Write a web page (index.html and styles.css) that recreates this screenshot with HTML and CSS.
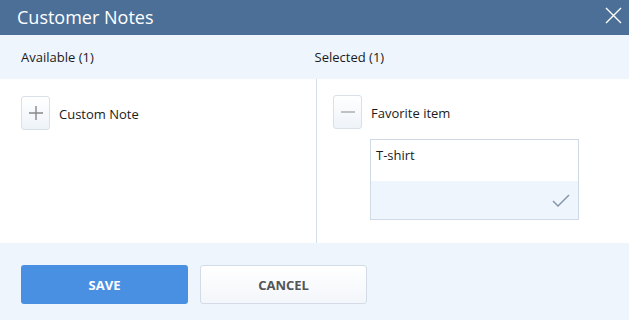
FILE: index.html
```html
<!DOCTYPE html>
<html>
<head>
<meta charset="utf-8">
<link rel="stylesheet" href="styles.css">
</head>
<body>
<div class="dialog">
  <div class="titlebar">
    <div class="title">Customer Notes</div>
    <button class="close" aria-label="Close">
      <svg width="17" height="17" viewBox="0 0 17 17"><path d="M1 1L16 16M16 1L1 16" stroke="#fff" stroke-width="1.4" fill="none"/></svg>
    </button>
  </div>
  <div class="cols-head">
    <div class="col-label">Available (1)</div>
    <div class="col-label right">Selected (1)</div>
  </div>
  <div class="cols">
    <div class="col">
      <div class="item">
        <button class="ibtn">
          <svg width="14" height="14" viewBox="0 0 14 14"><path d="M7 0V14M0 7H14" stroke="#888" stroke-width="1.4"/></svg>
        </button>
        <span>Custom Note</span>
      </div>
    </div>
    <div class="col right">
      <div class="item">
        <button class="ibtn">
          <svg width="14" height="14" viewBox="0 0 14 14"><path d="M0 7H14" stroke="#aaa" stroke-width="1.4"/></svg>
        </button>
        <span>Favorite item</span>
      </div>
      <div class="notebox">
        <div class="note-text">T-shirt</div>
        <div class="note-foot">
          <svg width="18" height="13" viewBox="0 0 18 13"><path d="M1 7L6 12L17 1" stroke="#8797ab" stroke-width="1.5" fill="none"/></svg>
        </div>
      </div>
    </div>
  </div>
  <div class="footer">
    <button class="btn save">SAVE</button>
    <button class="btn cancel">CANCEL</button>
  </div>
</div>
</body>
</html>
```
FILE: styles.css
```css
* { box-sizing: border-box; }
html, body { margin: 0; padding: 0; }
body {
  font-family: "Open Sans", "Noto Sans", sans-serif;
  font-size: 13px;
  color: #1b1b1b;
  background: #fff;
  width: 629px;
  height: 320px;
  overflow: hidden;
}
.dialog { display: flex; flex-direction: column; height: 320px; }
.titlebar {
  height: 35px;
  background: #4c6f98;
  display: flex;
  align-items: center;
  justify-content: space-between;
  padding: 0 7px 0 17px;
}
.title { color: #fff; font-size: 18px; line-height: 1; margin-top: -1px; }
.close {
  background: none; border: 0; padding: 0; width: 17px; height: 17px;
  margin-top: -5px; display: flex;
}
.cols-head {
  height: 44px;
  background: #eef5fc;
  display: flex;
  align-items: center;
}
.col-label { width: 316px; padding-left: 21px; }
.col-label.right { padding-left: 0; }
.cols {
  height: 164px;
  display: flex;
  background: #fff;
}
.col { width: 316px; padding: 17px 0 0 21px; }
.col.right {
  width: 313px;
  border-left: 1px solid #d5dfea;
  padding-left: 16px;
  padding-top: 16px;
}
.item { display: flex; align-items: center; gap: 9px; }
.item span { margin-top: 1px; }
.ibtn {
  width: 29px; height: 34px;
  border: 1px solid #d9e0e8;
  border-radius: 3px;
  background: linear-gradient(#fff, #eef3f9);
  padding: 0;
  display: flex; align-items: center; justify-content: center;
}
.notebox {
  margin: 10px 0 0 37px;
  width: 209px;
  height: 81px;
  border: 1px solid #cfdae6;
  display: flex; flex-direction: column;
}
.note-text { height: 41px; padding: 6px 0 0 5px; }
.note-foot {
  flex: 1;
  background: #eef5fc;
  display: flex; justify-content: flex-end; align-items: flex-end;
  padding: 0 8px 12px 0;
}
.footer {
  flex: 1;
  background: #eef5fc;
  display: flex;
  gap: 12px;
  padding: 22px 0 0 21px;
}
.btn {
  width: 167px; height: 39px;
  border-radius: 3px;
  font-family: "Open Sans", "Noto Sans", sans-serif;
  font-weight: 700;
  font-size: 13px;
  padding: 1px 0 0;
}
.save { background: #4a90e2; color: #fff; border: 0; }
.cancel {
  background: linear-gradient(#fff, #f3f6fa);
  border: 1px solid #d3dce6;
  color: #555;
}
```
